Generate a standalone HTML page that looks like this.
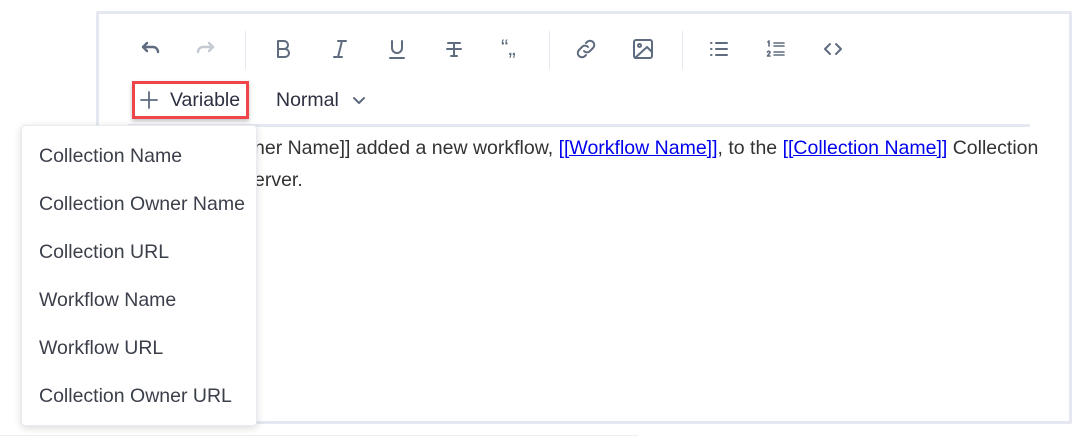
<!DOCTYPE html>
<html><head><style>
*{margin:0;padding:0;box-sizing:border-box}
body{width:1087px;height:446px;background:#fff;position:relative;overflow:hidden;font-family:"Liberation Sans",Arial,sans-serif}
.ed{position:absolute;left:96px;top:11px;width:976px;height:413px;border:3px solid #e5e8f0;border-radius:2px;background:#fff}
.ic{position:absolute;top:37px;width:24px;height:24px}
.sep{position:absolute;top:31px;width:1px;height:38px;background:#e5e8f0}
svg{stroke:#5f6b7e;fill:none;stroke-width:2;stroke-linecap:round;stroke-linejoin:round}
.hl{position:absolute;left:128px;top:124px;width:902px;height:3px;background:#e5e8f0}
.txt{position:absolute;left:254px;top:132px;font-size:19.5px;color:#333;line-height:32px;white-space:nowrap}
a{color:#0000ee}
.var{position:absolute;left:132px;top:81px;width:117px;height:38px;border:3px solid #f0454a;box-shadow:0 2px 4px rgba(0,0,0,.25)}
.dd{position:absolute;left:21px;top:125px;width:236px;height:301px;background:#fff;border-radius:4px;box-shadow:0 2px 8px rgba(0,0,0,.15);border:1px solid #e8ebf2}
.dd div{position:absolute;left:17px;font-size:19.5px;color:#3b3f4a}
</style></head><body>
<div class="ed"></div>
<svg class="ic" style="left:138px;stroke-width:2.4" viewBox="0 0 24 24"><path d="M5 10h10a5 5 0 0 1 5 5"/><path d="M9 6l-4 4 4 4"/></svg>
<svg class="ic" style="left:194px;stroke:#c4c9d2;stroke-width:2.4" viewBox="0 0 24 24"><path d="M19 10H9a5 5 0 0 0-5 5"/><path d="M15 6l4 4-4 4"/></svg>
<div class="sep" style="left:245px"></div>
<svg class="ic" style="left:271px" viewBox="0 0 24 24"><path d="M7 4h6a4 4 0 0 1 0 8H7zM7 12h7a4 4 0 0 1 0 8H7z"/></svg>
<svg class="ic" style="left:328px" viewBox="0 0 24 24"><path d="M10 4h8M6 20h8M14 4l-4 16"/></svg>
<svg class="ic" style="left:385px" viewBox="0 0 24 24"><path d="M7 4v7a5 5 0 0 0 10 0V4M5 21h14"/></svg>
<svg class="ic" style="left:442px" viewBox="0 0 24 24"><path d="M6 6h12M12 6v13M9 19h6M5 12h14"/></svg>
<div style="position:absolute;left:501px;top:35px;font-size:22px;color:#5f6b7e;font-family:'Liberation Sans',sans-serif">“„</div>
<div class="sep" style="left:549px"></div>
<svg class="ic" style="left:574px" viewBox="0 0 24 24"><path d="M10 14a4 4 0 0 0 6 0l3-3a4 4 0 0 0-6-6l-1 1"/><path d="M14 10a4 4 0 0 0-6 0l-3 3a4 4 0 0 0 6 6l1-1"/></svg>
<svg class="ic" style="left:631px" viewBox="0 0 24 24"><rect x="3" y="3" width="18" height="18" rx="2"/><circle cx="8.5" cy="8.5" r="1.5"/><path d="M21 15l-5-5L4 21"/></svg>
<div class="sep" style="left:682px"></div>
<svg class="ic" style="left:707px" viewBox="0 0 24 24"><path d="M9 6h11M9 12h11M9 18h11M4 6h.5M4 12h.5M4 18h.5"/></svg>
<svg class="ic" style="left:764px;stroke-width:1.6" viewBox="0 0 24 24"><path d="M10 6h10M10 9h10M10 15h10M10 18h10M4 5l1-1v5M3.5 15a1.3 1.3 0 0 1 2.5.5L3.5 19H6"/></svg>
<svg class="ic" style="left:821px" viewBox="0 0 24 24"><path d="M9 7l-5 5 5 5M15 7l5 5-5 5"/></svg>
<div class="var"></div>
<svg style="position:absolute;left:139px;top:90px;width:20px;height:20px;stroke-width:1.8" viewBox="0 0 20 20"><path d="M10 2v16M2 10h16"/></svg>
<div style="position:absolute;left:170px;top:89px;font-size:19.5px;color:#2c3040">Variable</div>
<div style="position:absolute;left:276px;top:89px;font-size:19.5px;color:#2c3040">Normal</div>
<svg style="position:absolute;left:352px;top:94px;width:14px;height:14px" viewBox="0 0 14 14"><path d="M2 4l5 5 5-5"/></svg>
<div class="hl"></div>
<div class="txt">ner Name]] added a new workflow, <a href="#">[[Workflow Name]]</a>, to the <a href="#">[[Collection Name]]</a> Collection<br>erver.</div>
<div class="dd">
<div style="top:19px">Collection Name</div>
<div style="top:67px">Collection Owner Name</div>
<div style="top:115px">Collection URL</div>
<div style="top:163px">Workflow Name</div>
<div style="top:211px">Workflow URL</div>
<div style="top:259px">Collection Owner URL</div>
</div>
<div style="position:absolute;left:0;top:435px;width:638px;height:1px;background:#eceef2"></div>
</body></html>
